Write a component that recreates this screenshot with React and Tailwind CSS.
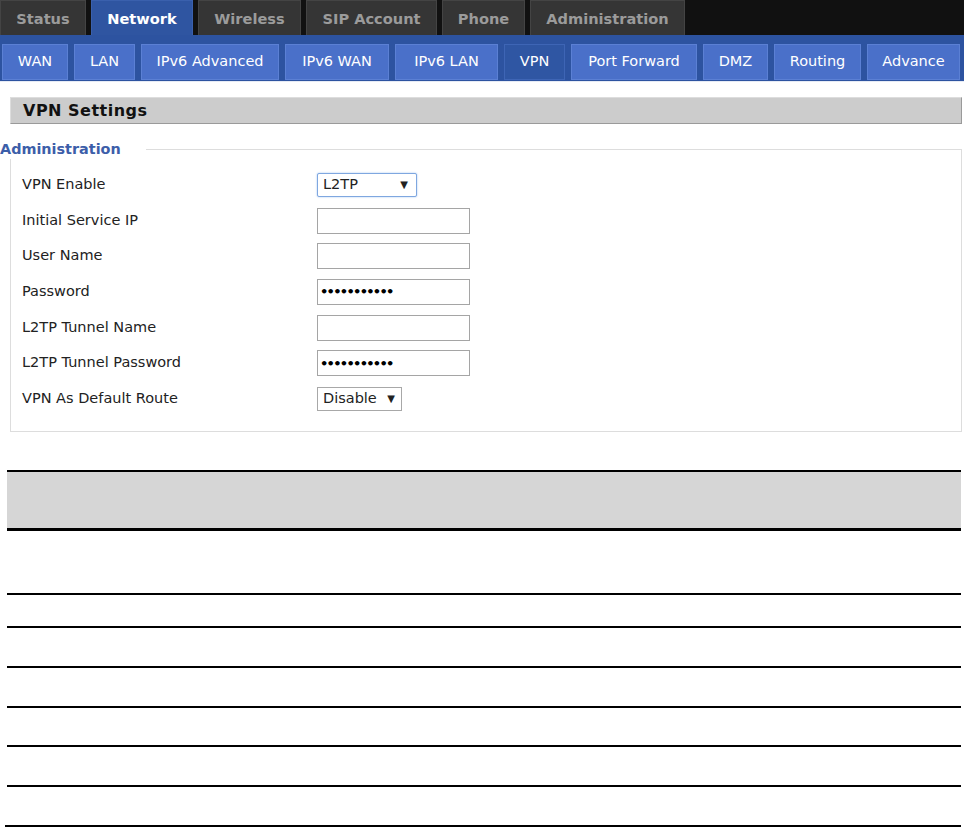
import React from 'react';

const mainTabs = [
    { name: 'Status', w: 'w-[86px]' },
    { name: 'Network', w: 'w-[102px]', active: true },
    { name: 'Wireless', w: 'w-[103px]' },
    { name: 'SIP Account', w: 'w-[131px]' },
    { name: 'Phone', w: 'w-[83px]' },
    { name: 'Administration', w: 'w-[155px]' },
];

const subTabs = [
    { name: 'WAN', w: 'w-[66px]' },
    { name: 'LAN', w: 'w-[61px]' },
    { name: 'IPv6 Advanced', w: 'w-[138px]' },
    { name: 'IPv6 WAN', w: 'w-[104px]' },
    { name: 'IPv6 LAN', w: 'w-[103px]' },
    { name: 'VPN', w: 'w-[61px]', active: true },
    { name: 'Port Forward', w: 'w-[126px]' },
    { name: 'DMZ', w: 'w-[65px]' },
    { name: 'Routing', w: 'w-[87px]' },
    { name: 'Advance', w: 'w-[93px]' },
];

const rows = [
    { label: 'VPN Enable', type: 'select', value: 'L2TP', focus: true },
    { label: 'Initial Service IP', type: 'text' },
    { label: 'User Name', type: 'text' },
    { label: 'Password', type: 'password' },
    { label: 'L2TP Tunnel Name', type: 'text' },
    { label: 'L2TP Tunnel Password', type: 'password' },
    { label: 'VPN As Default Route', type: 'select', value: 'Disable' },
];

const Field = ({ row }) => {
    if (row.type === 'select') {
        return row.focus ? (
            <div className="flex items-center justify-between w-[100px] h-[24px] pl-[5px] pr-[8px] border border-[#7fa7e0] rounded-[2px] shadow-[0_0_2px_#9cc0f0] bg-white">
                <span>{row.value}</span>
                <span className="text-[10px]">▼</span>
            </div>
        ) : (
            <div className="flex items-center justify-between w-[85px] h-[24px] pl-[5px] pr-[6px] border border-[#a8a8a8] bg-white">
                <span>{row.value}</span>
                <span className="text-[10px]">▼</span>
            </div>
        );
    }
    return (
        <div className="flex items-center w-[153px] h-[26px] px-[2px] border border-[#a5a5a5] bg-white">
            {row.type === 'password' && (
                <span className="text-[13px] font-bold tracking-[-1.7px] text-black">•••••••••••</span>
            )}
        </div>
    );
};

export default function App() {
    return (
        <div className="bg-white min-h-[828px] text-[#222]" style={{ fontFamily: '"DejaVu Sans", Verdana, sans-serif' }}>
            {/* top tabs */}
            <div className="h-[35px] bg-[#111111] flex gap-[5px] items-stretch">
                {mainTabs.map(t => (
                    <div
                        key={t.name}
                        className={
                            t.active
                                ? t.w + ' flex items-center justify-center pt-[2px] bg-[#2f55a1] text-white font-bold text-[14.6px] border-t border-x border-[#3a60ad]'
                                : t.w + ' flex items-center justify-center pt-[2px] bg-[#353535] text-[#9b9b9b] font-bold text-[14.6px] border-t border-x border-[#444444]'
                        }
                    >
                        {t.name}
                    </div>
                ))}
            </div>

            {/* sub tabs */}
            <div className="h-[47px] bg-[#2d53a0] flex gap-[6px] pl-[2px] pt-[9px] pb-[2px] border-b border-[#e6ebf5]">
                {subTabs.map(t => (
                    <div
                        key={t.name}
                        className={
                            t.active
                                ? t.w + ' h-[36px] flex items-center justify-center bg-[#2f56a3] border border-[#3e65b5] text-white text-[14.5px]'
                                : t.w + ' h-[36px] flex items-center justify-center bg-[#4a70c9] border border-[#5b80d4] text-white text-[14.5px]'
                        }
                    >
                        {t.name}
                    </div>
                ))}
            </div>

            {/* section header */}
            <div className="mt-[15px] ml-[10px] mr-[2px] h-[27px] bg-[#cccccc] border border-[#dddddd] border-b-[#9a9a9a] border-r-[#9a9a9a] flex items-center pl-[12px]">
                <span className="font-bold text-[16px] tracking-[0.5px] text-[#111]">VPN Settings</span>
            </div>

            {/* fieldset */}
            <div className="relative mt-[25px] ml-[10px] mr-[2px] border border-[#dddddd] pt-[17px] pb-[14px] pl-[11px]">
                <span className="absolute left-[-11px] top-[-11px] bg-white pr-[25px] font-bold text-[14.4px] text-[#3c5ea9] leading-[20px]">
                    Administration
                </span>
                {rows.map(r => (
                    <div key={r.label} className="flex items-center h-[35.7px] text-[14.5px] text-[#222]">
                        <div className="w-[295px]">{r.label}</div>
                        <Field row={r} />
                    </div>
                ))}
            </div>

            {/* table */}
            <div className="mt-[38px] ml-[7px] mr-[3px]">
                <div className="h-[61px] bg-[#d6d6d6] border-t-2 border-b-[3px] border-black"></div>
                <div className="h-[64px] border-b-2 border-black"></div>
                <div className="h-[33px] border-b-2 border-black"></div>
                <div className="h-[40px] border-b-2 border-black"></div>
                <div className="h-[40px] border-b-2 border-black"></div>
                <div className="h-[39px] border-b-2 border-black"></div>
                <div className="h-[40px] border-b-2 border-black"></div>
                <div className="h-[40px] border-b-2 border-black -ml-[2px]"></div>
            </div>
        </div>
    );
}
